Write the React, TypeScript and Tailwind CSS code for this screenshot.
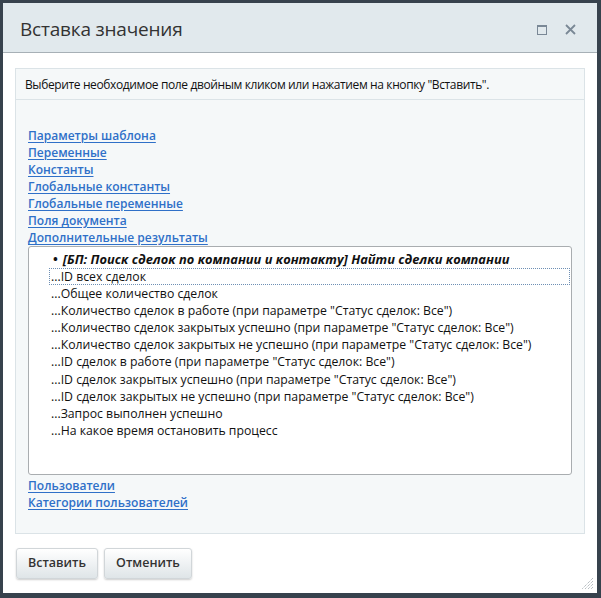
import React from "react";

const groupsTop = [
  "Параметры шаблона",
  "Переменные",
  "Константы",
  "Глобальные константы",
  "Глобальные переменные",
  "Поля документа",
  "Дополнительные результаты",
];

const groupsBottom = ["Пользователи", "Категории пользователей"];

const results = [
  "ID всех сделок",
  "Общее количество сделок",
  'Количество сделок в работе (при параметре "Статус сделок: Все")',
  'Количество сделок закрытых успешно (при параметре "Статус сделок: Все")',
  'Количество сделок закрытых не успешно (при параметре "Статус сделок: Все")',
  'ID сделок в работе (при параметре "Статус сделок: Все")',
  'ID сделок закрытых успешно (при параметре "Статус сделок: Все")',
  'ID сделок закрытых не успешно (при параметре "Статус сделок: Все")',
  "Запрос выполнен успешно",
  "На какое время остановить процесс",
];

const GroupLink = ({ label }: { label: string }) => (
  <a href="#" className="block h-[17px] leading-[17px] text-[#2f70c8] underline underline-offset-2 font-semibold w-fit">
    {label}
  </a>
);

const App: React.FC = () => {
  return (
    <div className="w-[601px] h-[598px] bg-[#37424d] p-[3px] pr-[4px] pb-[5px]" style={{ fontFamily: '"Open Sans", "Noto Sans", sans-serif' }}>
      <div className="h-full bg-white flex flex-col relative">
        {/* header */}
        <div className="h-[50px] bg-[#e1e9ed] border-b border-[#a7b0b6] flex items-center pl-[17px] pr-[21px] pt-[4px]">
          <h1 className="text-[19px] text-[#333] flex-1 tracking-[-0.2px]">Вставка значения</h1>
          <div className="flex items-center gap-[18px] text-[#7a8896]">
            <svg width="10" height="10" viewBox="0 0 10 10">
              <rect x="0.5" y="0.5" width="9" height="9" fill="none" stroke="currentColor" strokeWidth="1" />
              <rect x="0.5" y="0.5" width="9" height="1.5" fill="currentColor" />
            </svg>
            <svg width="11" height="11" viewBox="0 0 11 11">
              <path d="M1 1 L10 10 M10 1 L1 10" stroke="currentColor" strokeWidth="1.8" />
            </svg>
          </div>
        </div>

        {/* body */}
        <div className="px-[12px] pt-[15px]">
          <div className="h-[466px] bg-[#f5f8f9] border border-[#dbe3e7] text-[12px] text-[#111]">
            <div className="h-[31px] border-b border-[#dbe3e7] flex items-center px-[9px] pt-[1px] tracking-[-0.38px]">
              Выберите необходимое поле двойным кликом или нажатием на кнопку "Вставить".
            </div>
            <div className="pl-[12px] pr-[12px] pt-[27px]">
              {groupsTop.map((g) => (
                <GroupLink key={g} label={g} />
              ))}
              <div className="h-[229px] bg-white border border-[#a9adb0] rounded-[3px] pt-[4px] pl-[22px] pr-[1px] text-[12.25px]">
                <div className="h-[17px] leading-[17px] font-bold italic text-[12.85px] text-[#111]">
                  <span className="ml-[2px] mr-[5px] not-italic">•</span>[БП: Поиск сделок по компании и контакту] Найти сделки компании
                </div>
                {results.map((r, i) => (
                  <div
                    key={r}
                    className={`h-[17.1px] leading-[16px] -ml-[2px] pl-[1px] border border-dotted ${i === 0 ? "border-[#6e8fb4]" : "border-transparent"}`}
                  >
                    ...{r}
                  </div>
                ))}
              </div>
              <div className="pt-[2px]">
                {groupsBottom.map((g) => (
                  <GroupLink key={g} label={g} />
                ))}
              </div>
            </div>
          </div>
        </div>

        {/* buttons */}
        <div className="flex gap-[6px] px-[13px] pt-[14px]">
          <button className="h-[31px] w-[82px] rounded-[3px] border border-[#d1d6d9] bg-gradient-to-b from-white to-[#dfe5e8] shadow-[0_1px_2px_rgba(0,0,0,0.2)] text-[12.5px] text-[#333] font-semibold">
            Вставить
          </button>
          <button className="h-[31px] w-[88px] rounded-[3px] border border-[#d1d6d9] bg-gradient-to-b from-white to-[#dfe5e8] shadow-[0_1px_2px_rgba(0,0,0,0.2)] text-[12.5px] text-[#333] font-semibold">
            Отменить
          </button>
        </div>

        {/* resize grip */}
        <svg className="absolute right-[3px] bottom-[3px]" width="12" height="12" viewBox="0 0 12 12">
          <path d="M11 3 L3 11 M11 6 L6 11 M11 9 L9 11 M11 0 L0 11" stroke="#9aa3aa" strokeWidth="1" strokeDasharray="1 1" />
        </svg>
      </div>
    </div>
  );
};

export default App;
